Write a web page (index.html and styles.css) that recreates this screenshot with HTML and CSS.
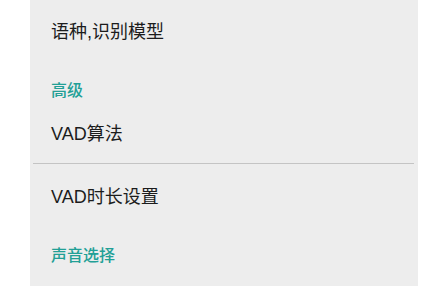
FILE: index.html
```html
<!DOCTYPE html>
<html lang="zh-CN">
<head>
<meta charset="utf-8">
<link rel="stylesheet" href="styles.css">
</head>
<body>
<div class="panel">
  <div class="item first">语种,识别模型</div>
  <div class="header">高级</div>
  <div class="item">VAD算法</div>
  <div class="divider"></div>
  <div class="item">VAD时长设置</div>
  <div class="header">声音选择</div>
  <div class="item">声音选择</div>
</div>
</body>
</html>
```

FILE: styles.css
```css
html, body {
  margin: 0;
  padding: 0;
  background: #ffffff;
  height: 286px;
  overflow: hidden;
}
.panel {
  margin-left: 30px;
  width: 388px;
  height: 286px;
  overflow: hidden;
  background: #ededed;
  display: flex;
  flex-direction: column;
  font-family: "Liberation Sans", "Noto Sans CJK SC", sans-serif;
}
.item {
  flex: none;
  height: 62px;
  display: flex;
  align-items: center;
  padding-left: 21px;
  font-size: 18px;
  color: #1c1c1c;
}
.item.first {
  margin-top: -1px;
}
.header {
  flex: none;
  height: 40px;
  display: flex;
  align-items: flex-end;
  padding-left: 21px;
  padding-bottom: 2px;
  box-sizing: border-box;
  font-size: 16px;
  font-weight: 500;
  color: #22a096;
  font-family: "Noto Sans CJK SC", sans-serif;
  line-height: 20px;
}
.divider {
  flex: none;
  height: 1px;
  margin: 0 4px 0 3px;
  background: #c4c4c4;
}
```
